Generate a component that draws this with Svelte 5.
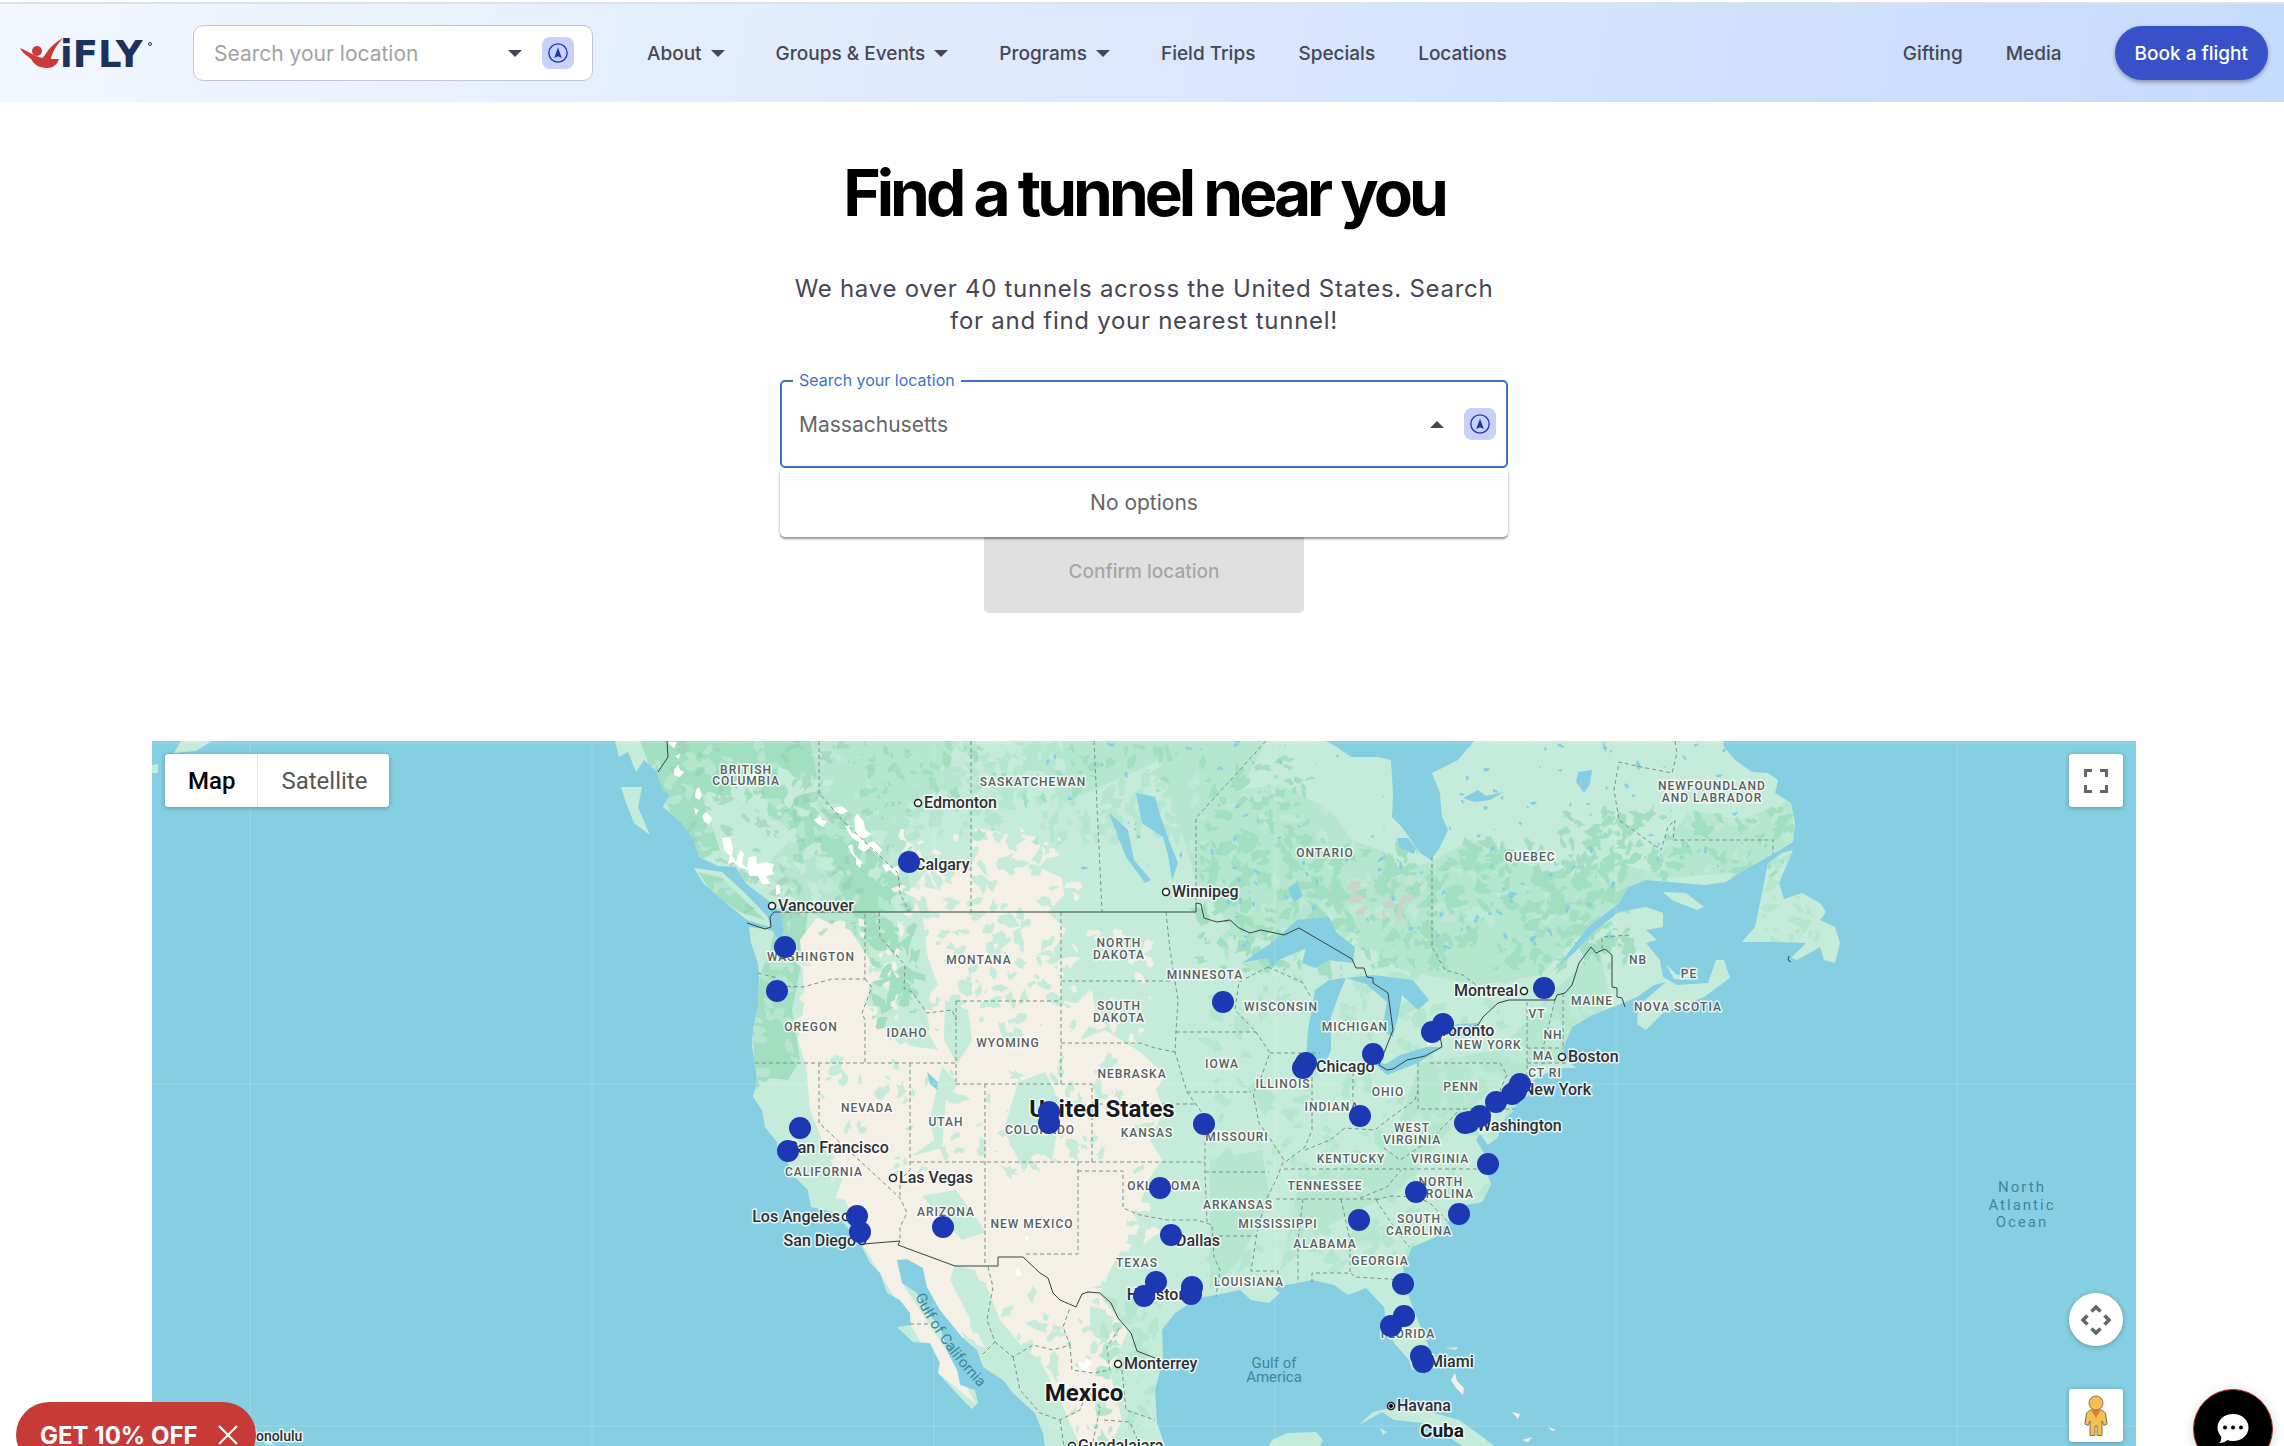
<script lang="ts">
  let query: string = $state("");
  let place: string = $state("Massachusetts");

  const mainNav = [
    { name: "About", menu: true },
    { name: "Groups & Events", menu: true },
    { name: "Programs", menu: true },
    { name: "Field Trips", menu: false },
    { name: "Specials", menu: false },
    { name: "Locations", menu: false }
  ];

  // tunnels, in map units
  const pins: number[][] = [
    [909, 862], [785, 947], [777, 991], [1223, 1002], [1544, 988], [1443, 1024], [1432, 1032],
    [1373, 1054], [1306, 1063], [1303, 1068], [800, 1128], [788, 1151], [1049, 1112], [1049, 1123],
    [1204, 1124], [1160, 1188], [1171, 1235], [1156, 1282], [1144, 1296], [1192, 1287], [1191, 1294],
    [857, 1216], [860, 1232], [943, 1227], [1360, 1116], [1520, 1084], [1516, 1091], [1512, 1094],
    [1496, 1102], [1480, 1116], [1465, 1123], [1469, 1122], [1488, 1164], [1416, 1192], [1459, 1214],
    [1359, 1220], [1403, 1284], [1404, 1316], [1391, 1326], [1421, 1356], [1423, 1362]
  ];

  const regions: [string, number, number][] = [
    ["BRITISH", 746, 774], ["COLUMBIA", 746, 785], ["SASKATCHEWAN", 1033, 786],
    ["NEWFOUNDLAND", 1712, 790], ["AND LABRADOR", 1712, 802], ["ONTARIO", 1325, 857],
    ["QUEBEC", 1530, 861], ["WASHINGTON", 811, 961], ["MONTANA", 979, 964], ["OREGON", 811, 1031],
    ["IDAHO", 907, 1037], ["WYOMING", 1008, 1047], ["NORTH", 1119, 947], ["DAKOTA", 1119, 959],
    ["SOUTH", 1119, 1010], ["DAKOTA", 1119, 1022], ["NEBRASKA", 1132, 1078], ["MINNESOTA", 1205, 979],
    ["WISCONSIN", 1281, 1011], ["MICHIGAN", 1355, 1031], ["IOWA", 1222, 1068], ["ILLINOIS", 1283, 1088],
    ["INDIANA", 1332, 1111], ["OHIO", 1388, 1096], ["PENN", 1461, 1091], ["NEW YORK", 1488, 1049],
    ["VT", 1537, 1018], ["NH", 1553, 1039], ["MA", 1543, 1060], ["CT RI", 1545, 1077],
    ["MAINE", 1592, 1005], ["NB", 1638, 964], ["PE", 1689, 978], ["NOVA SCOTIA", 1678, 1011],
    ["NEVADA", 867, 1112], ["UTAH", 946, 1126], ["COLORADO", 1040, 1134], ["KANSAS", 1147, 1137],
    ["CALIFORNIA", 824, 1176], ["ARIZONA", 946, 1216], ["NEW MEXICO", 1032, 1228],
    ["OKLAHOMA", 1164, 1190], ["TEXAS", 1137, 1267], ["MISSOURI", 1237, 1141], ["ARKANSAS", 1238, 1209],
    ["MISSISSIPPI", 1278, 1228], ["ALABAMA", 1325, 1248], ["GEORGIA", 1380, 1265],
    ["LOUISIANA", 1249, 1286], ["TENNESSEE", 1325, 1190], ["KENTUCKY", 1351, 1163],
    ["WEST", 1412, 1132], ["VIRGINIA", 1412, 1144], ["VIRGINIA", 1440, 1163], ["NORTH", 1441, 1186],
    ["CAROLINA", 1441, 1198], ["SOUTH", 1419, 1223], ["CAROLINA", 1419, 1235], ["FLORIDA", 1408, 1338]
  ];

  // name, x of the dot, baseline, side the name stands on
  const cities: [string, number, number, string][] = [
    ["Edmonton", 918, 808, "start"], ["Calgary", 909, 870, "start"], ["Vancouver", 772, 911, "start"],
    ["Winnipeg", 1166, 897, "start"], ["Montreal", 1524, 996, "end"], ["Toronto", 1433, 1036, "start"],
    ["Boston", 1562, 1062, "start"], ["Chicago", 1310, 1072, "start"], ["New York", 1517, 1095, "start"],
    ["Washington", 1471, 1131, "start"], ["San Francisco", 782, 1153, "start"],
    ["Las Vegas", 893, 1183, "start"], ["Los Angeles", 846, 1222, "end"], ["San Diego", 862, 1246, "end"],
    ["Dallas", 1170, 1246, "start"], ["Houston", 1157, 1300, "middle"], ["Monterrey", 1118, 1369, "start"],
    ["Miami", 1423, 1367, "start"], ["Havana", 1391, 1411, "start"], ["Guadalajara", 1072, 1451, "start"]
  ];

  const land =
    "M615 741L619 757L628 752L636 772L644 760L657 772L663 790L670 794L663 807L682 823L694 840L699 857L718 866L736 867L745 883L768 900L780 912L784 930L780 943L772 930L749 927L751 943L758 963L759 973L758 1007L753 1030L752 1047L755 1063L757 1080L753 1097L762 1110L765 1127L777 1142L778 1157L788 1160L790 1172L808 1190L811 1207L833 1212L847 1227L857 1237L862 1247L870 1263L880 1273L887 1293L900 1300L910 1313L911 1325L897 1327L913 1342L930 1343L940 1363L938 1373L960 1397L972 1409L978 1403L975 1390L960 1385L957 1370L948 1353L940 1327L927 1312L917 1293L902 1283L897 1260L907 1259L923 1268L927 1287L940 1310L962 1337L977 1350L983 1367L1003 1380L1013 1393L1035 1413L1043 1433L1045 1446L1165 1446L1157 1423L1155 1390L1163 1360L1162 1330L1175 1313L1198 1298L1216 1295L1240 1290L1251 1300L1269 1303L1280 1293L1272 1287L1298 1283L1312 1280L1334 1285L1348 1295L1366 1288L1384 1307L1387 1327L1394 1343L1409 1360L1412 1370L1426 1370L1430 1350L1419 1323L1409 1297L1403 1267L1412 1247L1434 1238L1448 1222L1466 1205L1482 1202L1491 1185L1487 1173L1484 1153L1476 1140L1480 1134L1488 1145L1498 1137L1501 1123L1514 1110L1518 1100L1524 1086L1541 1076L1558 1068L1576 1068L1565 1058L1563 1048L1572 1027L1592 1015L1623 1003L1637 997L1654 985L1666 982L1652 994L1638 1006L1637 1024L1646 1030L1663 1013L1704 997L1730 978L1724 960L1716 960L1708 983L1677 985L1663 977L1660 960L1646 943L1657 940L1646 930L1663 927L1663 913L1646 907L1619 912L1596 930L1574 953L1552 972L1565 957L1588 927L1619 903L1628 887L1646 880L1681 883L1704 885L1726 882L1744 870L1766 858L1793 842L1795 823L1791 803L1775 793L1778 780L1768 773L1752 772L1735 760L1724 747L1723 741L1474 741L1458 760L1432 773L1440 793L1442 817L1448 830L1440 847L1431 860L1420 853L1402 827L1392 817L1393 793L1391 760L1378 757L1351 757L1337 747L1326 741Z" +
    "M694 868L722 872L745 893L768 917L770 927L747 920L726 903L703 883Z" +
    "M621 787L642 787L638 807L650 835L634 823L625 800Z" +
    "M1793 850L1779 883L1784 899L1802 893L1820 903L1826 912L1820 920L1835 927L1840 943L1835 963L1824 960L1820 947L1797 960L1791 958L1806 943L1775 942L1742 942L1755 927L1762 893L1768 863L1782 853Z" +
    "M1663 892L1686 893L1704 907L1697 910L1672 900ZM1666 964L1677 975L1694 972L1690 980L1674 979Z" +
    "M1397 838L1408 838L1416 848L1414 854L1399 848Z" +
    "M1359 1425L1373 1412L1394 1407L1423 1410L1459 1420L1484 1438L1494 1446L1462 1446L1444 1433L1423 1423L1394 1420L1382 1412Z" +
    "M1269 1446L1272 1440L1287 1433L1316 1432L1323 1440L1320 1446ZM1445 1348L1458 1347L1456 1350ZM1380 1428L1387 1432L1383 1435Z" +
    "M174 753L181 741L212 741L196 751ZM152 765L158 764L158 773L152 773ZM264 1444L268 1440L276 1446Z";

  const plains =
    "M912 890L930 866L950 880L971 850L975 828L1000 832L1010 850L1030 836L1046 850L1040 868L1062 878L1064 895L1048 912L1066 930L1054 950L1064 975L1060 1000L1080 1004L1092 990L1096 1015L1080 1040L1105 1030L1140 1052L1165 1075L1156 1090L1164 1110L1150 1140L1162 1160L1148 1180L1140 1205L1126 1220L1128 1240L1110 1270L1100 1295L1128 1330L1110 1372L1122 1420L1110 1446L1080 1446L1060 1400L1040 1360L1000 1330L975 1270L955 1265L950 1280L985 1348L955 1335L923 1290L923 1268L897 1260L902 1283L948 1353L976 1404L938 1373L911 1325L880 1273L862 1244L845 1200L820 1195L795 1160L800 1130L830 1160L810 1110L806 1066L798 1040L805 1000L800 940L816 918L850 930L870 960L868 1010L900 1045L930 1030L924 1000L938 985L925 950L922 912Z";

  const woodland =
    "M1062 741L1266 741L1240 790L1280 784L1330 810L1352 840L1380 850L1400 870L1432 862L1470 840L1510 856L1560 880L1610 860L1650 872L1668 840L1690 810L1740 820L1790 800L1795 840L1740 872L1646 880L1590 925L1540 975L1480 985L1400 970L1330 915L1240 940L1196 880L1160 760L1070 800Z" +
    "M690 741L960 741L940 770L944 790L910 800L905 840L912 912L870 1000L860 940L810 912L760 870L800 830L740 810L700 800Z" +
    "M1420 1063L1500 1050L1560 985L1600 950L1610 1000L1560 1060L1500 1080L1440 1140L1400 1190L1330 1225L1280 1270L1300 1180L1390 1150Z" +
    "M1210 1160L1262 1150L1270 1200L1240 1260L1210 1290Z";

  const mountains =
    "M640 741L810 741L820 793L846 823L900 880L912 912L925 950L915 985L890 968L868 940L840 890L800 840L778 820L740 800L716 806L700 790L720 850L700 860L663 800Z" +
    "M780 905L808 912L802 960L792 1010L800 1060L788 1080L770 1078L755 1090L753 1030L760 975L770 950Z" +
    "M698 872L722 878L765 920L740 912L712 893Z";

  const hills =
    "M868 912L922 912L930 975L915 1010L938 1050L910 1046L880 1020L870 985Z" +
    "M945 1000L968 1010L972 1040L957 1064L944 1040ZM1018 1082L1045 1072L1062 1105L1052 1160L1036 1150L1024 1172L1004 1130Z" +
    "M942 1066L958 1084L946 1100L942 1148L912 1156L934 1140L930 1118ZM922 1196L956 1190L986 1232L962 1240Z" +
    "M960 1275L985 1282L1000 1320L1030 1356L1056 1410L1070 1446L1045 1446L1013 1393L985 1350L988 1330Z" +
    "M758 1080L800 1090L812 1130L842 1180L830 1212L808 1200L780 1150ZM1090 1306L1106 1310L1104 1340L1090 1330Z";

  const lakes =
    "M1242 963L1271 943L1297 920L1329 917L1337 933L1355 947L1353 963L1329 960L1315 968L1302 963L1306 948L1279 960L1271 968L1268 958Z" +
    "M1315 990L1329 980L1346 978L1340 992L1331 1017L1331 1050L1326 1062L1306 1060L1308 1030Z" +
    "M1346 978L1373 975L1413 980L1429 1000L1418 1010L1402 995L1398 1017L1393 1037L1382 1030L1387 1002L1366 984Z" +
    "M1373 1062L1387 1075L1418 1063L1442 1047L1427 1047L1400 1055L1386 1064ZM1440 1030L1458 1024L1478 1023L1480 1030L1458 1038Z" +
    "M1136 793L1155 797L1160 815L1170 843L1178 863L1172 880L1168 855L1163 837L1142 823Z" +
    "M1109 813L1128 830L1134 860L1151 880L1145 883L1126 857ZM927 1072L938 1082L937 1090L930 1084Z" +
    "M1463 798L1478 790L1486 796L1504 792L1490 800L1474 802ZM1578 772L1592 770L1590 784L1584 793L1576 782ZM1288 888L1297 882L1303 896L1294 903ZM736 870L750 888L772 908L768 912L748 896Z";

  const provinces =
    "M819 741L819 793L845 823L898 873L900 893L909 912M971 741V912M1094 741L1102 912M1266 741L1196 818V903M1432 857V947L1445 970L1463 975L1476 985" +
    "M1675 741L1677 753L1672 773L1641 767L1619 762L1614 790L1619 820L1637 833L1661 850L1668 827L1675 820L1673 840H1773V854" +
    "M758 973L777 978L780 986L803 987L832 979H865V912M865 979L872 987L862 1013L865 1020V1063M755 1063H956" +
    "M879 912L880 937L905 965L904 988L912 992L927 1013L952 1010L956 1020M956 1001H1061M956 1001V1084M1061 912V1084M1061 981H1170M1061 1043H1140L1155 1048L1175 1052" +
    "M1166 912L1170 950L1178 1000L1176 1032L1175 1052L1187 1092L1205 1117V1172L1207 1222M1176 1032H1256M956 1084H1092V1162M1092 1104H1197" +
    "M819 1063V1123L900 1198L907 1213L900 1227V1241M910 1063V1170L900 1180V1198M910 1162H1205M985 1084V1266M1078 1162V1254H1023M1078 1171H1123V1208L1140 1215L1167 1220L1197 1220L1212 1225L1214 1257L1220 1270L1216 1297" +
    "M1205 1172H1269M1187 1092H1251M1219 1236H1257M1268 967L1239 982L1235 1010L1256 1032L1270 1053L1259 1083L1253 1093L1259 1123L1271 1140L1284 1160L1276 1180L1266 1200L1257 1233L1251 1271H1278V1287" +
    "M1270 1053H1320M1312 1070V1130L1305 1147L1284 1163M1353 1072V1127M1305 1150L1330 1140L1345 1128L1375 1130L1390 1118L1415 1100L1418 1090M1418 1063V1109H1515M1430 1063H1500L1507 1075L1500 1090L1515 1100" +
    "M1284 1169H1484M1276 1199H1378M1303 1199L1298 1240V1283M1341 1199L1350 1240V1273M1312 1283V1273H1351L1355 1277L1405 1280M1376 1200L1394 1227L1409 1247M1376 1200L1391 1196L1416 1197L1430 1203L1448 1222" +
    "M1360 1198L1387 1187L1401 1170M1384 1148L1400 1160L1430 1140L1450 1120L1460 1109M1527 1002V1082M1555 1000L1543 1048M1563 993V1047M1527 1048H1563M1527 1063H1568M1268 967L1302 982L1311 997M1602 949V937L1630 935" +
    "M988 1267L993 1287L987 1320L995 1342L983 1354M995 1342L1013 1357L1033 1345L1053 1350L1070 1345L1063 1327L1070 1308M1070 1345L1072 1370L1093 1373L1110 1370L1107 1347L1120 1327M1013 1357L1020 1390L1040 1413L1060 1420L1080 1410L1088 1390L1100 1408L1092 1446M1122 1370L1126 1410L1155 1420M910 1324H930M1060 1420L1064 1446M1104 1420L1130 1422L1140 1446";

  const frontiers =
    "M667 741L668 757L658 772M747 923L765 929L771 927L770 917L774 912H1196V903L1201 904L1204 918L1217 922L1230 920L1239 928L1250 933L1261 930L1284 935L1299 928L1352 959L1356 968L1364 968L1367 977L1373 978L1373 983L1388 993L1393 1030L1382 1058L1379 1065L1387 1070L1393 1069L1407 1060L1425 1056L1442 1047L1440 1036L1478 1025L1483 1017L1498 1003L1509 1000H1555L1557 995L1565 993L1572 985L1579 963L1591 947L1596 953L1605 949L1612 955V987L1617 988V997L1622 998L1625 1007" +
    "M863 1244L900 1241L898 1245L955 1266H998V1257H1023L1040 1273L1048 1278L1053 1293L1060 1300L1076 1307L1082 1294L1088 1292L1100 1293L1111 1303L1118 1318L1131 1333L1137 1351L1155 1358M1789 956L1788 960L1791 962";

  const glaciers =
    "M722 838L730 837L733 848L732 856L736 862L740 850L744 854L742 864L747 868L749 857L756 856L757 864L766 862L774 864L772 870L774 874L766 876L770 884L762 884L758 876L750 876L748 870L740 868L734 862L728 864L730 856L724 850Z" +
    "M674 770L678 764L680 770L684 772L680 777L674 775ZM696 790L699 787L702 796L699 800L695 797ZM702 816L706 812L712 818L709 825L704 821ZM694 808L699 810L696 815ZM814 820L820 816L822 820L827 821L823 827L818 824ZM668 742L677 742L674 748ZM675 756L680 754L679 759Z" +
    "M833 808L842 806L848 811L842 814L835 812ZM845 826L850 826L851 832L856 834L854 820L857 813L864 822L865 829L871 834L866 838L862 838L866 844L874 841L882 850L878 855L870 848L864 852L858 848L859 842L852 838Z" +
    "M882 865L888 864L892 868L898 866L900 872L896 876L890 870L886 872ZM848 846L852 844L854 854L862 862L860 868L856 864L856 858L850 852ZM776 886L779 884L781 893L776 895Z" +
    "M1078 1362L1084 1364L1086 1358L1092 1362L1088 1368L1092 1372L1084 1371L1080 1368ZM1017 1266L1022 1276L1016 1276ZM1025 1235L1029 1238L1026 1242ZM1426 1040L1432 1044L1428 1046Z";

  // scatters small uneven patches over a box, the same ones on every load
  function scatter(seed: number, count: number, x: number, y: number, w: number, h: number, size: number): string {
    let s = seed * 7919;
    const rnd = () => (s = (s * 16807) % 2147483647) / 2147483647;
    let d = "";
    for (let i = 0; i < count; i++) {
      const cx = x + rnd() * w;
      const cy = y + rnd() * h;
      const r = size * (0.3 + rnd() * 1.2);
      const lean = rnd() * Math.PI;
      for (let k = 0; k < 9; k++) {
        const a = (k / 9) * Math.PI * 2;
        const q = r * (0.35 + rnd());
        const px = Math.cos(a) * q;
        const py = Math.sin(a) * q * 0.55;
        const X = cx + px * Math.cos(lean) - py * Math.sin(lean);
        const Y = cy + px * Math.sin(lean) + py * Math.cos(lean);
        d += (k ? "L" : "M") + X.toFixed(1) + " " + Y.toFixed(1);
      }
      d += "Z";
    }
    return d;
  }

  const patches = [
    { tone: "base", d: scatter(11, 70, 720, 780, 110, 120, 11) },
    { tone: "light", d: scatter(13, 130, 650, 741, 270, 180, 8) },
    { tone: "deep", d: scatter(23, 160, 670, 741, 240, 200, 6) },
    { tone: "wood", d: scatter(31, 260, 820, 741, 380, 100, 8) },
    { tone: "mount", d: scatter(37, 50, 860, 741, 320, 60, 6) },
    { tone: "light", d: scatter(47, 260, 1190, 741, 600, 190, 9) },
    { tone: "mount", d: scatter(59, 380, 1200, 840, 430, 130, 8) },
    { tone: "mount", d: scatter(61, 50, 1200, 760, 110, 90, 7) },
    { tone: "mount", d: scatter(67, 110, 1560, 810, 230, 70, 7) },
    { tone: "sand", d: scatter(71, 70, 800, 920, 100, 140, 8) },
    { tone: "sand", d: scatter(73, 50, 900, 830, 180, 90, 7) },
    { tone: "base", d: scatter(83, 150, 870, 830, 200, 210, 8) },
    { tone: "mount", d: scatter(89, 40, 870, 912, 50, 110, 9) },
    { tone: "base", d: scatter(97, 90, 820, 1060, 330, 120, 7) },
    { tone: "sand", d: scatter(101, 90, 1060, 920, 90, 340, 7) },
    { tone: "sand", d: scatter(103, 30, 830, 1080, 60, 100, 7) },
    { tone: "wood", d: scatter(113, 220, 1210, 930, 300, 340, 9) },
    { tone: "light", d: scatter(127, 170, 1280, 980, 320, 290, 9) },
    { tone: "base", d: scatter(131, 60, 960, 1280, 160, 166, 8) },
    { tone: "wood", d: scatter(149, 60, 1100, 1290, 70, 156, 7) },
    { tone: "light", d: scatter(151, 60, 755, 940, 50, 230, 7) },
    { tone: "wood", d: scatter(163, 50, 1750, 850, 80, 110, 7) },
    { tone: "lake", d: scatter(173, 110, 1040, 741, 700, 130, 3) },
    { tone: "lake", d: scatter(181, 80, 1220, 850, 400, 100, 3) },
    { tone: "rock", d: scatter(191, 9, 1325, 870, 90, 60, 7) }
  ];
</script>

{#snippet locateIcon()}
  <svg viewBox="0 0 24 24" width="20" height="20" aria-hidden="true">
    <circle cx="12" cy="12" r="11" fill="none" stroke="#1c36b0" stroke-width="1.6" />
    <path d="M12 5.500L16.500 18L12 16L7.500 18Z" fill="#1c36b0" />
  </svg>
{/snippet}

<div class="page">
  <header>
    <a class="logo" href="#home" aria-label="iFLY home">
      <svg viewBox="0 -10 134 52" width="134" height="52">
        <circle cx="17" cy="14" r="5" fill="#c93a38" />
        <path d="M0 11C6 13 14 19 22 21C27 18 26 11 43 1C35 10 32 16 31 22L39 22C37 28 33 31 27 31C18 31 14 27 11 22C8 19 3 17 0 11Z" fill="#c93a38" />
        <text class="wordmark" x="40" y="30">iFLY</text>
        <circle cx="130" cy="7" r="1.500" fill="none" stroke="#1c315c" />
      </svg>
    </a>

    <div class="search">
      <input type="text" placeholder="Search your location" aria-label="Search your location" bind:value={query} />
      <button class="arrow" aria-label="Open"><svg viewBox="0 0 14 7" width="14" height="7"><path d="M0 0H14L7 7Z" /></svg></button>
      <button class="locate" aria-label="Use my location">{@render locateIcon()}</button>
    </div>

    <nav class="main-nav">
      {#each mainNav as item}
        {#if item.menu}
          <button>{item.name}<svg viewBox="0 0 14 7" width="14" height="7"><path d="M0 0H14L7 7Z" /></svg></button>
        {:else}
          <a href="#{item.name.toLowerCase().replace(' ', '-')}">{item.name}</a>
        {/if}
      {/each}
    </nav>

    <nav class="side-nav">
      <a href="#gifting">Gifting</a>
      <a href="#media">Media</a>
    </nav>
    <button class="book">Book a flight</button>
  </header>

  <main>
    <section class="finder">
      <h1>Find a tunnel near you</h1>
      <p>We have over 40 tunnels across the United States. Search for and find your nearest tunnel!</p>

      <div class="combo">
        <fieldset>
          <legend><label for="place">Search your location</label></legend>
          <div class="field-row">
            <input id="place" type="text" bind:value={place} />
            <button class="arrow" aria-label="Close"><svg viewBox="0 0 14 7" width="14" height="7"><path d="M0 7H14L7 0Z" /></svg></button>
            <button class="locate" aria-label="Use my location">{@render locateIcon()}</button>
          </div>
        </fieldset>
        <div class="options">No options</div>
      </div>
      <button class="confirm" disabled>Confirm location</button>
    </section>

    <section class="map">
      <svg class="canvas" viewBox="152 741 1984 705" preserveAspectRatio="xMidYMin slice">
        <defs>
          <clipPath id="shore"><path d={land} /></clipPath>
          <path id="gulf" d="M915 1296Q938 1346 986 1394" />
        </defs>
        <path class="base" d={land} />
        <g clip-path="url(#shore)">
          <path class="wood" d={woodland} />
          <path class="mount" d={mountains} />
          <path class="sand" d={plains} />
          <path class="base" d={hills} />
          {#each patches as patch}
            <path class={patch.tone} d={patch.d} />
          {/each}
          <path class="snow" d={glaciers} />
        </g>
        <path class="lake" d={lakes} />
        <path class="sand" d="M1451 1380L1455 1373L1457 1381L1464 1388L1463 1395L1456 1388ZM1512 1412L1520 1414L1518 1419ZM1548 1427L1556 1430L1552 1431ZM1522 1440L1532 1437L1528 1442Z" />
        <path class="grid" d="M250 741V1446M592 741V1446M934 741V1446M1275 741V1446M1616 741V1446M1957 741V1446M152 743H2136M152 1084H2136M152 1426H2136" />
        <path class="province" d={provinces} />
        <path class="frontier" d={frontiers} />

        {#each regions as [name, x, y]}
          <text class="region" {x} {y}>{name}</text>
        {/each}
        {#each cities as [name, x, y, side]}
          {#if side !== "middle"}<circle class="dot" cx={x} cy={y - 5} r="3.500" />{/if}
          {#if name === "Havana"}<circle cx={x} cy={y - 5} r="2" />{/if}
          <text class="city" x={side === "start" ? x + 6 : side === "end" ? x - 6 : x} {y} text-anchor={side}>{name}</text>
        {/each}
        <text class="city minor" x="246" y="1441">Honolulu</text>
        <text class="country" x="1102" y="1117">United States</text>
        <text class="country" x="1084" y="1401">Mexico</text>
        <text class="country small" x="1442" y="1437">Cuba</text>
        <text class="sea" x="1274" y="1368">Gulf of</text>
        <text class="sea" x="1274" y="1382">America</text>
        <text class="sea ocean" x="2022" y="1192">North</text>
        <text class="sea ocean" x="2022" y="1210">Atlantic</text>
        <text class="sea ocean" x="2022" y="1227">Ocean</text>
        <text class="sea along"><textPath href="#gulf">Gulf of California</textPath></text>

        {#each pins as [x, y]}
          <circle class="pin" cx={x} cy={y} r="11" />
        {/each}
      </svg>

      <div class="map-type">
        <button class="on">Map</button>
        <button>Satellite</button>
      </div>
      <button class="tool full" aria-label="Toggle fullscreen view">
        <svg viewBox="0 0 24 24" width="24" height="24"><path d="M1.500 8V1.500H8M16 1.500H22.500V8M22.500 16V22.500H16M8 22.500H1.500V16" fill="none" stroke="#666" stroke-width="3" /></svg>
      </button>
      <div class="tools">
        <button class="tool round" aria-label="Map camera controls">
          <svg viewBox="0 0 32 32" width="32" height="32"><path d="M11.500 7.500L16 3L20.500 7.500M11.500 24.500L16 29L20.500 24.500M7.500 11.500L3 16L7.500 20.500M24.500 11.500L29 16L24.500 20.500" fill="none" stroke="#666" stroke-width="3.500" /></svg>
        </button>
        <button class="tool" aria-label="Street View">
          <svg viewBox="0 0 24 42" width="24" height="42">
            <path d="M6 15L2.500 18L1 29L4 30.500L6 26V40.500H11V31H13V40.500H18V26L20 30.500L23 29L21.500 18L18 15Z" fill="#f6bf4f" stroke="#7d735c" />
            <path d="M7 15H17L12 23Z" fill="#d9823c" />
            <circle cx="12" cy="8" r="7" fill="#f6bf4f" stroke="#7d735c" />
          </svg>
        </button>
      </div>
    </section>
  </main>
</div>

<div class="promo">
  <button>GET 10% OFF</button>
  <button aria-label="Close offer"><svg viewBox="0 0 20 20" width="20" height="20"><path d="M1 1L19 19M19 1L1 19" stroke="#fff" stroke-width="2" /></svg></button>
</div>
<button class="chat" aria-label="Open chat">
  <svg viewBox="0 0 32 30" width="32" height="30">
    <path d="M16 0C25 0 31.500 6 31.500 13.500C31.500 21 25 27 16 27C14 27 12 26.700 10.500 26C8.500 28 5.500 29 2.500 29C4 27 4.500 25 4.200 22.500C2 20 .5 17 .5 13.500C.5 6 7 0 16 0Z" fill="#fff" />
    <circle cx="8" cy="13.500" r="2" /><circle cx="16" cy="13.500" r="2" /><circle cx="24" cy="13.500" r="2" />
  </svg>
</button>

<style>
  :global(body) {
    background: #fff;
    overflow: hidden;
  }

  * {
    box-sizing: border-box;
  }

  .page {
    display: flex;
    flex-direction: column;
    height: 100vh;
    padding-top: 2px;
    font-family: Inter, sans-serif;
    color: #464655;
  }

  button, input {
    font: inherit;
    color: inherit;
    border: 0;
    background: none;
    padding: 0;
    outline: none;
  }

  button {
    cursor: pointer;
  }

  header {
    display: flex;
    align-items: center;
    height: 100px;
    flex-shrink: 0;
    padding: 0 16px 0 20px;
    border-top: 2px solid #dfe2e3;
    background: linear-gradient(100deg, #f3f7ff 0%, #e2eefd 32%, #d4e2fd 68%, #c6dbfb 100%);
    font-size: 19px;
    font-weight: 500;
  }

  .logo {
    display: flex;
    margin-right: 39px;
  }

  .wordmark {
    font: bold 37px "DejaVu Sans", sans-serif;
    fill: #1c315c;
  }

  .search {
    display: flex;
    align-items: center;
    width: 400px;
    height: 56px;
    padding: 0 18px 0 20px;
    border: 1px solid #c4c4d4;
    border-radius: 10px;
    background: #fff;
    font-size: 21px;
    font-weight: 400;
  }

  input {
    flex: 1;
    min-width: 0;
  }

  .search input::placeholder {
    color: #a2a2a2;
    opacity: 1;
  }

  .arrow {
    display: flex;
    margin-right: 20px;
  }

  .locate {
    display: flex;
    align-items: center;
    justify-content: center;
    width: 32px;
    height: 32px;
    border-radius: 8px;
    background: #c8d0fd;
  }

  .arrow svg, .main-nav svg {
    fill: #464655;
  }

  nav {
    display: flex;
    gap: 43px;
  }

  nav a {
    color: inherit;
    text-decoration: none;
  }

  .main-nav {
    margin-left: 54px;
  }

  .main-nav button {
    display: flex;
    align-items: center;
    gap: 9px;
    margin-right: 8px;
  }

  .side-nav {
    margin-left: auto;
  }

  .book {
    height: 54px;
    margin-left: 53px;
    padding: 0 20px;
    border-radius: 27px;
    background: #3850c8;
    color: #fff;
    box-shadow: 0 2px 4px rgba(0, 0, 0, 0.35);
  }

  main {
    display: flex;
    flex-direction: column;
    flex: 1;
    min-height: 0;
  }

  .finder {
    display: flex;
    flex-direction: column;
    align-items: center;
    padding: 52px 0 128px 4px;
  }

  h1 {
    margin: 0;
    font-size: 64px;
    font-weight: 700;
    line-height: 78px;
    letter-spacing: -4px;
    color: #000;
  }

  p {
    width: 728px;
    margin: 41px 0 43px;
    font-size: 24px;
    line-height: 32px;
    letter-spacing: 0.03em;
    text-align: center;
  }

  .combo {
    position: relative;
    width: 728px;
    height: 88px;
  }

  fieldset {
    height: 88px;
    margin: 0;
    padding: 0 10px 0 11px;
    border: 2px solid #3a72cd;
    border-radius: 5px;
  }

  legend {
    height: 2px;
    padding: 0 6px;
    font-size: 16px;
    line-height: 0;
    color: #3a72cd;
  }

  .field-row {
    display: flex;
    align-items: center;
    height: 84px;
    padding-left: 6px;
    font-size: 21px;
    color: #666;
  }

  .options {
    position: absolute;
    top: 88px;
    left: 0;
    right: 0;
    padding: 20px 0 19px;
    border-radius: 5px;
    background: #fff;
    box-shadow: 0 2px 2px rgba(0, 0, 0, 0.35), 0 1px 4px rgba(0, 0, 0, 0.15);
    font-size: 21px;
    line-height: 30px;
    text-align: center;
    color: #666;
  }

  .confirm {
    width: 320px;
    height: 84px;
    margin-top: 61px;
    border-radius: 5px;
    background: #e0e0e0;
    color: #a6a6a6;
    font-size: 19px;
    font-weight: 500;
  }

  .map {
    position: relative;
    flex: 1;
    min-height: 0;
    margin: 0 148px 0 152px;
    overflow: hidden;
    background: #86cfe3;
    font-family: Roboto, sans-serif;
  }

  .canvas {
    display: block;
    width: 100%;
    height: 100%;
  }

  .base { fill: #c5ebda; }
  .light { fill: #c5ebda; opacity: 0.6; }
  .wood { fill: #b5e6cf; }
  .mount { fill: #a2dfc1; }
  .deep { fill: #8fcdb0; opacity: 0.5; }
  .sand { fill: #f5f0e5; }
  .snow { fill: #fff; }
  .rock { fill: #cfd2cb; }
  .lake { fill: #86cfe3; }

  .grid {
    fill: none;
    stroke: #fff;
    opacity: 0.2;
  }

  .province {
    fill: none;
    stroke: #7c9189;
    stroke-dasharray: 4 3;
  }

  .frontier {
    fill: none;
    stroke: #35443f;
  }

  .canvas text {
    paint-order: stroke;
    stroke: #fff;
    stroke-opacity: 0.8;
    stroke-width: 3px;
    stroke-linejoin: round;
  }

  .canvas .region {
    font-size: 12px;
    font-weight: 500;
    letter-spacing: 1px;
    text-anchor: middle;
    fill: #56605f;
  }

  .canvas .city {
    font-size: 16px;
    font-weight: 500;
    fill: #2c3034;
  }

  .canvas .minor {
    font-size: 14px;
  }

  .canvas .country {
    font-size: 24px;
    font-weight: 700;
    text-anchor: middle;
    fill: #17191c;
  }

  .canvas .small {
    font-size: 19px;
  }

  .canvas .sea {
    font-size: 15px;
    text-anchor: middle;
    fill: #3f8698;
    stroke: none;
  }

  .canvas .ocean {
    letter-spacing: 2px;
  }

  .canvas .along {
    text-anchor: start;
  }

  .dot {
    fill: #fff;
    stroke: #222;
    stroke-width: 1.5px;
  }

  .pin {
    fill: #1c38b2;
  }

  .map-type {
    position: absolute;
    top: 13px;
    left: 13px;
    display: flex;
    height: 53px;
    border-radius: 3px;
    background: #fff;
    box-shadow: 0 1px 5px rgba(0, 0, 0, 0.3);
    font-size: 24px;
  }

  .map-type button {
    padding: 0 22px 0 23px;
    color: #565656;
  }

  .map-type .on {
    border-right: 1px solid #e6e6e6;
    font-weight: 500;
    color: #000;
  }

  .tool {
    display: flex;
    align-items: center;
    justify-content: center;
    width: 54px;
    height: 53px;
    border-radius: 3px;
    background: #fff;
    box-shadow: 0 1px 5px rgba(0, 0, 0, 0.3);
  }

  .full {
    position: absolute;
    top: 13px;
    right: 13px;
  }

  .tools {
    position: absolute;
    right: 13px;
    bottom: 4px;
    display: flex;
    flex-direction: column;
    gap: 43px;
  }

  .round {
    border-radius: 27px;
  }

  .promo {
    position: fixed;
    left: 16px;
    bottom: -22px;
    display: flex;
    align-items: center;
    gap: 20px;
    height: 66px;
    padding: 0 18px 0 24px;
    border-radius: 33px;
    background: #c73a38;
    color: #fff;
    font: 700 24px Inter, sans-serif;
  }

  .promo svg {
    display: block;
  }

  .chat {
    position: fixed;
    right: 11px;
    bottom: -23px;
    display: flex;
    align-items: center;
    justify-content: center;
    width: 80px;
    height: 80px;
    border: 1px solid #b3261e;
    border-radius: 40px;
    background: #000;
    box-shadow: 0 2px 12px rgba(0, 0, 0, 0.15);
  }
</style>
